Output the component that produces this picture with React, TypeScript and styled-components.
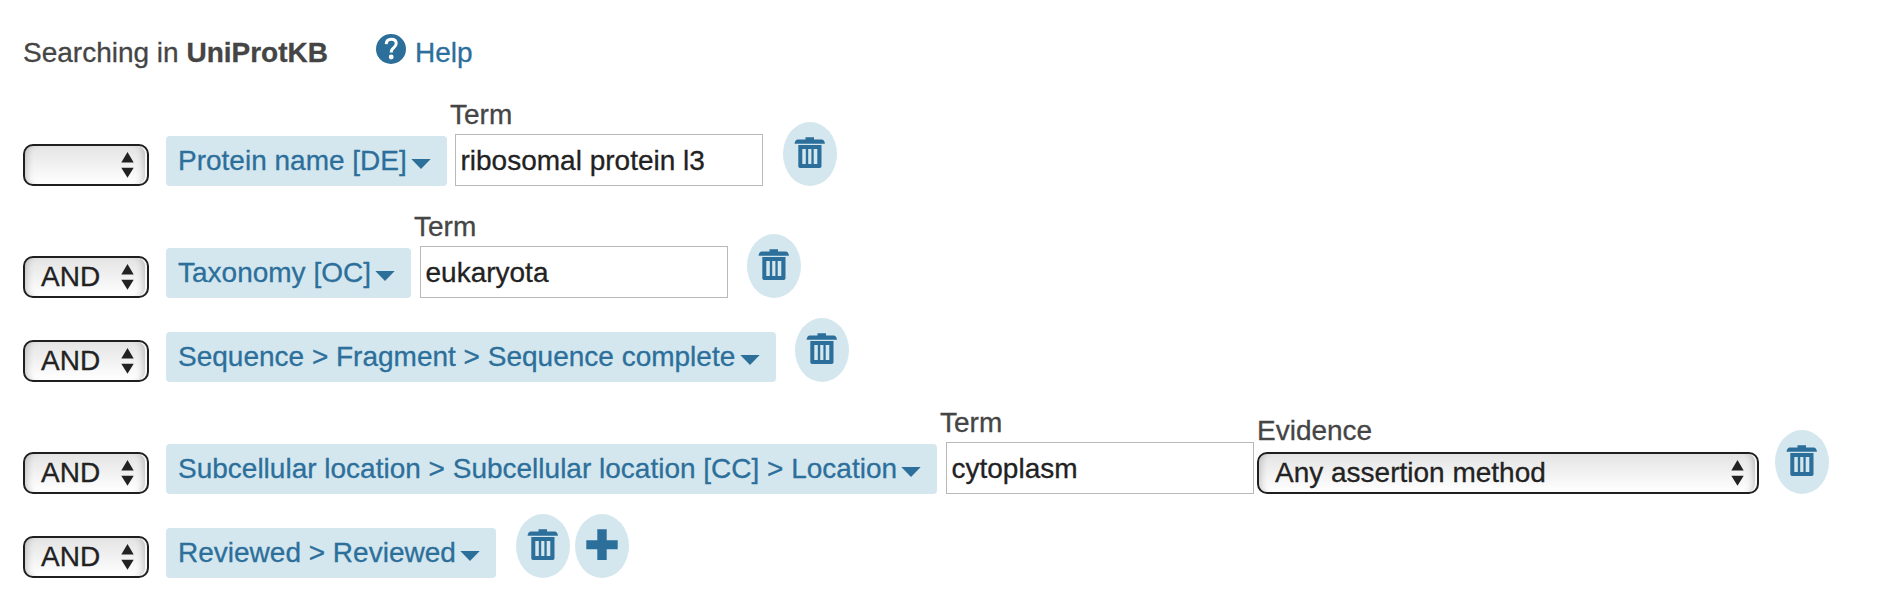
import React from "react";
import styled, { createGlobalStyle } from "styled-components";

const blue = "#2d6f9b";
const pale = "#d4e7ee";
const sans = `"Liberation Sans", Arial, Helvetica, sans-serif`;

const GlobalStyle = createGlobalStyle`
  * { box-sizing: border-box; }
  body { margin: 0; background: #fff; }
`;

const Page = styled.main`
  height: 600px;
  overflow: hidden;
  padding: 37px 23px 0;
  font: 28px/32px ${sans};
  -webkit-text-stroke: 0.3px;
  color: #454545;
  white-space: nowrap;
`;

const Header = styled.header`
  display: flex;
  height: 57px;
  align-items: flex-start;
`;

const Title = styled.div`
  width: 353px;
`;

const HelpLink = styled.a`
  display: flex;
  gap: 9px;
  color: ${blue};
  svg { margin-top: -3px; }
`;

const Row = styled.div`
  display: flex;
  align-items: flex-end;
  padding-bottom: 20px;
`;

const SelectBox = styled.div<{ $width: number }>`
  display: flex;
  justify-content: space-between;
  flex: none;
  width: ${(p) => p.$width}px;
  height: 42px;
  padding: 3px 13px 0 16px;
  border: 2px solid #1f1f1f;
  border-radius: 10px;
  color: #222;
  background: linear-gradient(#e4e4e4, #fff);
  box-shadow: inset -2px 0 0 rgba(255, 255, 255, 0.8),
    inset 8px 0 7px -6px rgba(0, 0, 0, 0.2),
    inset -10px 0 7px -6px rgba(0, 0, 0, 0.2);
  svg { margin-top: 3px; }
`;

const FieldButton = styled.div<{ $width: number }>`
  display: flex;
  justify-content: space-between;
  flex: none;
  width: ${(p) => p.$width}px;
  height: 50px;
  margin-left: 17px;
  padding: 9px 16px 0 12px;
  border-radius: 4px;
  background: ${pale};
  color: ${blue};
  svg { margin-top: 14px; }
`;

const TermField = styled.label`
  display: flex;
  flex-direction: column;
  gap: 3px;
  padding-top: 5px;
`;

const TermInput = styled.input<{ $indent: number }>`
  width: 308px;
  height: 52px;
  margin: 0 0 0 ${(p) => p.$indent}px;
  padding: 2px 5px 0 4.5px;
  border: 1px solid #b9b9b9;
  border-radius: 0;
  font: 28px ${sans};
  -webkit-text-stroke: 0.3px;
  color: #222;
  outline: none;
`;

const TermLabel = styled.span`
  margin-left: 3px;
`;

const EvidenceField = styled.div`
  display: flex;
  flex-direction: column;
  gap: 5px;
  margin-left: 3px;
`;

const RoundButton = styled.div<{ $gap: number }>`
  display: flex;
  justify-content: center;
  width: 54px;
  height: 64px;
  padding-top: 15px;
  margin-left: ${(p) => p.$gap}px;
  border-radius: 50%;
  background: ${pale};
`;

const Arrows = () => (
  <svg width="13" height="26" viewBox="0 0 13 26" fill="#222">
    <path d="M6.500 0 12.700 10.500H.3zM.3 15.700h12.400L6.500 25.800z" />
  </svg>
);

const Caret = () => (
  <svg width="20" height="10" viewBox="0 0 20 10" fill={blue}>
    <path d="M.3 0h19.400L10 10z" />
  </svg>
);

const Trash = ({ gap }: { gap: number }) => (
  <RoundButton $gap={gap}>
    <svg width="32" height="32" viewBox="0 0 32 32" fill={blue}>
      <path d="M11.500 .3h8.500v2.200h8q2.800 .8 2.900 4.200H.6q.1-3.400 2.900-4.200h8z" />
      <path
        fillRule="evenodd"
        d="M4.300 8h23.200v21.300q0 1.700-1.700 1.700H6q-1.700 0-1.700-1.700zM8.300 12v15h3.500V12zm5.900 0v15h3.200V12zm5.500 0v15h3.600V12z"
      />
    </svg>
  </RoundButton>
);

const Plus = ({ gap }: { gap: number }) => (
  <RoundButton $gap={gap}>
    <svg width="32" height="32" viewBox="0 0 32 32" fill={blue}>
      <path d="M11.300 .3h9.400v11h11v9h-11v10.700h-9.400V20.300h-11v-9h11z" />
    </svg>
  </RoundButton>
);

const Select = ({ value, width }: { value: string; width: number }) => (
  <SelectBox $width={width}>
    <span>{value}</span>
    <Arrows />
  </SelectBox>
);

const Field = ({ text, width }: { text: string; width: number }) => (
  <FieldButton $width={width}>
    <span>{text}</span>
    <Caret />
  </FieldButton>
);

const Term = ({ value, indent }: { value: string; indent: number }) => (
  <TermField>
    <TermLabel>Term</TermLabel>
    <TermInput defaultValue={value} $indent={indent} />
  </TermField>
);

export default function App() {
  return (
    <Page>
      <GlobalStyle />
      <Header>
        <Title>
          Searching in <b>UniProtKB</b>
        </Title>
        <HelpLink>
          <svg width="30" height="30" viewBox="0 0 30 30" fill="none">
            <circle cx="15" cy="15" r="15" fill={blue} />
            <path
              d="M10.200 10.200Q10.500 5.300 15.300 5.300q4.900 0 4.900 4.300 0 2.400-2.600 4.300Q15.200 15.600 15.200 18.600"
              stroke="#fff"
              strokeWidth="3"
            />
            <circle cx="15.200" cy="23" r="2.400" fill="#fff" />
          </svg>
          <span>Help</span>
        </HelpLink>
      </Header>
      <Row>
        <Select value="" width={126} />
        <Field text="Protein name [DE]" width={281} />
        <Term value="ribosomal protein l3" indent={8} />
        <Trash gap={20} />
      </Row>
      <Row>
        <Select value="AND" width={126} />
        <Field text="Taxonomy [OC]" width={245} />
        <Term value="eukaryota" indent={9} />
        <Trash gap={19} />
      </Row>
      <Row>
        <Select value="AND" width={126} />
        <Field text="Sequence > Fragment > Sequence complete" width={610} />
        <Trash gap={19} />
      </Row>
      <Row>
        <Select value="AND" width={126} />
        <Field text="Subcellular location > Subcellular location [CC] > Location" width={771} />
        <Term value="cytoplasm" indent={9} />
        <EvidenceField>
          <span>Evidence</span>
          <Select value="Any assertion method" width={502} />
        </EvidenceField>
        <Trash gap={16} />
      </Row>
      <Row>
        <Select value="AND" width={126} />
        <Field text="Reviewed > Reviewed" width={330} />
        <Trash gap={20} />
        <Plus gap={5} />
      </Row>
    </Page>
  );
}
